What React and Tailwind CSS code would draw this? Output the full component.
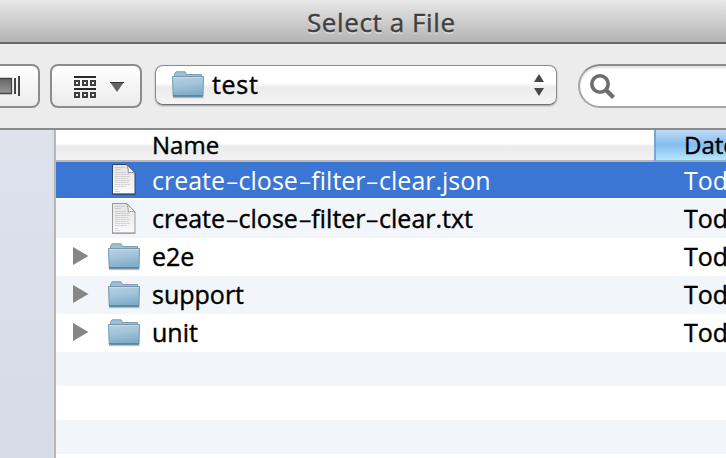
import React from "react";

function Folder({ className = "" }) {
  return (
    <svg className={`shrink-0 ${className}`} width="34" height="30" viewBox="0 0 34 30">
      <defs>
        <linearGradient id="folderFront" x1="0" y1="0" x2="0.25" y2="1">
          <stop offset="0" stopColor="#b9d2e3" />
          <stop offset="0.5" stopColor="#a2c3d8" />
          <stop offset="1" stopColor="#7fadc9" />
        </linearGradient>
      </defs>
      <path d="M2 27.4h30.6" stroke="#000" strokeOpacity="0.25" strokeWidth="1.5" />
      <path d="M3.5 8V4.6L5 1.8h9l1.6 2.7h14.9V8z" fill="#9dbfd3" stroke="#7c9fb5" />
      <path d="M1.5 6.5h31L32 26H2.2z" fill="url(#folderFront)" stroke="#7499b0" />
      <path d="M2 7.5h30" stroke="#cbdfeb" strokeOpacity="0.7" />
      <path d="M2 26h30" stroke="#4d7a97" strokeWidth="1.4" />
    </svg>
  );
}

function Document({ selected }) {
  const edge = selected ? "#2b4673" : "#999";
  return (
    <svg className="-mt-px shrink-0" width="26" height="33" viewBox="0 0 26 33">
      <defs>
        <linearGradient id="paper" x1="0" y1="0" x2="0" y2="1">
          <stop offset="0" stopColor="#e3e3e3" />
          <stop offset="1" stopColor="#fbfbfb" />
        </linearGradient>
        <linearGradient id="fold" x1="0" y1="1" x2="1" y2="0">
          <stop offset="0" stopColor="#fff" />
          <stop offset="0.55" stopColor="#eee" />
          <stop offset="1" stopColor="#aaa" />
        </linearGradient>
      </defs>
      <path d="M1.5 1.5h14.5l8 8.500v21h-22.500z" fill="url(#paper)" stroke={edge} />
      <path d="M1 31.3h23.500" stroke={edge} strokeWidth="1" />
      <path d="M4 4.5h10M4 6.5h6M4 9.5h11M4 11.5h14M4 13.5h15M4 15.5h13M4 17.5h15M4 19.5h14M4 21.5h15M4 23.5h12M4 26.5h3M4 28.5h5" stroke="#aaa" strokeOpacity="0.6" strokeWidth="0.8" strokeDasharray="3 .4 2 .5" />
      <path d="M15.500 1.500L24 10c-2-.8-5.200-.6-6.800 0 .3-3-.3-6-1.700-8.500z" fill="url(#fold)" stroke={selected ? "#66707f" : "#8d8d8d"} strokeWidth="0.8" />
    </svg>
  );
}

const rows = [
  { name: "create-close-filter-clear.json", kind: "file", selected: true, bg: "bg-[#3b76d4] text-white h-9 mb-0.5 leading-9" },
  { name: "create-close-filter-clear.txt", kind: "file", bg: "bg-[#f2f6fb] h-[38px] leading-9 [-webkit-text-stroke:0.4px_currentColor]" },
  { name: "e2e", kind: "folder", bg: "bg-white h-[38px] leading-9 [-webkit-text-stroke:0.4px_currentColor]" },
  { name: "support", kind: "folder", bg: "bg-[#f2f6fb] h-[38px] leading-9 [-webkit-text-stroke:0.4px_currentColor]" },
  { name: "unit", kind: "folder", bg: "bg-white h-[38px] leading-9 [-webkit-text-stroke:0.4px_currentColor]" },
];

// File names are set with wide hyphens.
function FileName({ name }) {
  return name.split("-").map((part, i) => (
    <React.Fragment key={i}>
      {i > 0 && <span className="inline-block w-[13.5px] text-center"><span className="inline-block scale-x-[1.65] scale-y-90">-</span></span>}
      {part}
    </React.Fragment>
  ));
}

function Row({ row }) {
  const lift = row.selected ? "" : "pb-0.5";
  return (
    <div className={`flex items-center text-[25px] whitespace-nowrap ${row.bg}`}>
      <div className="flex w-[52px] shrink-0 pl-[17px]">
        {row.kind === "folder" && (
          <svg className="-mt-[3px]" width="16" height="20" viewBox="0 0 16 20">
            <path d="M0 1l15.500 9L0 19z" fill="#868686" />
          </svg>
        )}
      </div>
      <div className="flex w-11 shrink-0">
        {row.kind === "folder" ? <Folder className="-ml-px" /> : <div className="pl-[3px]"><Document selected={row.selected} /></div>}
      </div>
      <div className={`w-[532px] shrink-0 ${lift}`}><FileName name={row.name} /></div>
      <div className={`shrink-0 ${lift}`}>Today</div>
    </div>
  );
}

export default function App() {
  return (
    <div className="flex h-[458px] w-[726px] flex-col overflow-hidden bg-[#ececec] font-['Open_Sans','Noto_Sans',sans-serif] text-black">
      <header className="h-11 shrink-0 border-b-2 border-[#696969] bg-linear-to-b from-[#e8e8e8] to-[#b4b4b4] pl-[307px] text-[26px] leading-[44px] tracking-[0.6px] whitespace-nowrap text-[#404040] [-webkit-text-stroke:0.4px_currentColor] [text-shadow:0_2px_0_rgba(255,255,255,0.4)]">
        Select a File
      </header>

      <div className="flex h-[84px] shrink-0 items-start overflow-hidden pt-5">
        <div className="flex h-11 w-10 shrink-0 items-center rounded-r-[8px] border-2 border-l-0 border-[#8c8c8c] bg-linear-to-b from-white to-[#ececec]">
          <svg width="22" height="22" viewBox="0 0 22 22">
            <defs>
              <linearGradient id="cover" x1="0" y1="0" x2="0" y2="1">
                <stop offset="0" stopColor="#666" />
                <stop offset="1" stopColor="#969696" />
              </linearGradient>
            </defs>
            <path d="M-2 3.500h13.500v15H-2z" fill="url(#cover)" stroke="#444" strokeWidth="1.300" />
            <path d="M15 3v16M19 1v20" stroke="#444" strokeWidth="2" />
          </svg>
        </div>
        <div className="ml-2.5 flex h-11 w-[92px] shrink-0 items-center rounded-[8px] border-2 border-[#8c8c8c] bg-linear-to-b from-white to-[#ececec]">
          <svg className="mt-0.5 ml-[22px]" width="22" height="22" viewBox="0 0 22 22" fill="none" stroke="#404040" strokeWidth="2">
            <path d="M0 1h22M0 13h22" stroke="#282828" />
            <path d="M1 5h4v4h-4zM9 5h4v4h-4zM17 5h4v4h-4zM1 17h4v4h-4zM9 17h4v4h-4zM17 17h4v4h-4z" />
          </svg>
          <svg className="mt-px ml-3.5" width="14" height="10" viewBox="0 0 14 10">
            <path d="M0 0h14L7 10z" fill="#626262" />
            <path d="M0 .5h14" stroke="#333" />
          </svg>
        </div>
        <div className="mt-px ml-[13px] flex h-10 w-[402px] shrink-0 items-center rounded-[8px] border border-[#8c8c8c] border-b-[#707070] bg-linear-to-b from-white from-45% via-[#ececec] via-55% to-[#f4f4f4] shadow-[0_1px_2px_rgba(0,0,0,0.35)]">
          <Folder className="ml-[15px]" />
          <span className="-mt-0.5 ml-[7px] text-[25px] leading-9 tracking-[0.7px] [-webkit-text-stroke:0.4px_currentColor]">test</span>
          <svg className="mr-3 ml-auto" width="10" height="22" viewBox="0 0 10 22" fill="#484848">
            <path d="M0 8L5 0l5 8zM0 14h10l-5 8z" />
          </svg>
        </div>
        <div className="ml-[21px] flex h-11 w-[220px] shrink-0 items-center rounded-full border-2 border-[#a6a6a6] border-t-[#8c8c8c] bg-white shadow-[inset_0_2px_2px_rgba(0,0,0,0.12)]">
          <svg className="mt-px ml-2.5" width="26" height="26" viewBox="0 0 26 26" fill="none" stroke="#6d6d6d">
            <circle cx="10" cy="10" r="8.200" strokeWidth="3.600" />
            <path d="M15.500 15.500L23.500 23.500" strokeWidth="4.500" />
          </svg>
        </div>
      </div>

      <main className="flex min-h-0 flex-1 border-t-2 border-[#8b8b8b]">
        <aside className="w-14 shrink-0 border-r-2 border-[#b7b7b7] bg-linear-to-b from-[#dde2eb] to-[#d5dce5] shadow-[inset_-2px_0_0_#d9dce5]" />
        <section className="w-[670px] shrink-0 overflow-hidden bg-white">
          <div className="flex h-8 text-2xl leading-[30px] whitespace-nowrap [-webkit-text-stroke:0.4px_currentColor]">
            <div className="w-[598px] shrink-0 border-b-2 border-[#b9b9b9] bg-linear-to-b from-white from-45% via-[#ebebeb] via-55% to-[#f2f2f2] pl-24">Name</div>
            <div className="w-[72px] shrink-0 overflow-hidden border-b-2 border-l-2 border-b-[#8fb3c8] border-l-[#829fd8] bg-linear-to-b from-[#c0daf3] via-[#83bdee] via-50% to-[#b8e7fa] pl-7">Date Modified</div>
          </div>
          {rows.map((row) => <Row key={row.name} row={row} />)}
          <div className="h-[34px] bg-[#f2f6fb]" />
          <div className="h-[34px] bg-white" />
          <div className="h-[34px] bg-[#f2f6fb]" />
        </section>
      </main>
    </div>
  );
}
